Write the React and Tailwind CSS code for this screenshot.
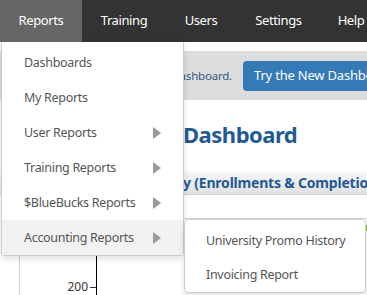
import React from 'react';

const menuItems = [
  { label: 'Dashboards' },
  { label: 'My Reports' },
  { label: 'User Reports', sub: true },
  { label: 'Training Reports', sub: true },
  { label: '$BlueBucks Reports', sub: true },
  { label: 'Accounting Reports', sub: true, active: true },
];

const navItems = [
  { label: 'Reports', w: 'w-[82px]', active: true },
  { label: 'Training', w: 'w-[84px]' },
  { label: 'Users', w: 'w-[70px]' },
  { label: 'Settings', w: 'w-[85px]' },
  { label: 'Help', w: 'w-[60px]' },
];

const Arrow = () => (
  <svg width="8" height="12" viewBox="0 0 8 12" className="shrink-0">
    <path d="M0 0 L8 6 L0 12 Z" fill="#999" />
  </svg>
);

const App = () => {
  return (
    <div className="relative w-[367px] h-[295px] overflow-hidden bg-white font-['Noto_Sans',sans-serif]">
      {/* top nav */}
      <nav className="flex h-[42px] bg-[#333333] text-white text-[13px] tracking-[-0.4px]">
        {navItems.map((n) => (
          <div
            key={n.label}
            className={`${n.w} shrink-0 flex items-center justify-center ${n.active ? 'bg-[#666666]' : ''}`}
          >
            {n.label}
          </div>
        ))}
      </nav>

      {/* page behind the menu */}
      <main className="flex flex-col">
        <div className="mt-[9px] h-[49px] bg-[#dddddd] flex items-center whitespace-nowrap">
          <div className="w-[232px] shrink-0 flex justify-end overflow-hidden text-[11.5px] tracking-[-0.2px] text-[#2d5a82]">
            You are viewing the classic dashboard.
          </div>
          <div className="ml-[11px] h-[30px] rounded-[4px] bg-[#337ab7] text-white text-[13px] tracking-[-0.2px] pl-[11px] pr-3 flex items-center">
            Try the New Dashboard
          </div>
        </div>

        <h1 className="mt-[19px] pl-[183px] text-[22px] tracking-[-0.5px] leading-[30px] font-bold text-[#1f5a96] whitespace-nowrap">
          Dashboard
        </h1>

        <div className="mt-[22px] h-[24px] bg-gradient-to-b from-[#f7f7f7] to-[#e2e2e2] border-b border-[#cfcfcf] flex items-center whitespace-nowrap text-[14px] tracking-[-0.2px] font-bold text-[#1f5a96]">
          <div className="w-[183px] shrink-0 flex justify-end overflow-hidden">Monthly Training Activit</div>
          <span>y (Enrollments &amp; Completions)</span>
        </div>

        <div className="mt-[23px] ml-[19px] h-[80px] border-l border-t border-[#d4d4d4] flex">
          <div className="w-[76px] shrink-0 flex flex-col justify-end pb-[5px]">
            <div className="flex items-center justify-end text-[12px] text-[#333] leading-none">
              200<span className="ml-[2px] w-[6px] h-px bg-[#333]" />
            </div>
          </div>
          <div className="w-px bg-black" />
          <div className="flex-1 flex justify-end pt-[6px]">
            <div className="w-[4px] h-[6px] bg-[#8cc63f]" />
          </div>
        </div>
      </main>

      {/* reports dropdown */}
      <div className="absolute left-[1px] top-[42px] w-[183px] bg-white border border-t-0 border-[#cccccc] rounded-b-[4px] shadow-[0_3px_6px_rgba(0,0,0,0.12)] pt-[3px] text-[12.5px] tracking-[-0.3px] text-[#555555]">
        {menuItems.map((m) => (
          <div
            key={m.label}
            className={`h-[35px] flex items-center justify-between pl-[22px] pr-[22px] ${m.active ? 'bg-[#f2f2f2]' : ''}`}
          >
            <span className="pt-[2px]">{m.label}</span>
            {m.sub && <Arrow />}
          </div>
        ))}
      </div>

      {/* accounting submenu */}
      <div className="absolute left-[184px] top-[219px] w-[182px] h-[74px] bg-white border border-[#cccccc] rounded-[4px] shadow-[0_3px_6px_rgba(0,0,0,0.12)] pt-[4px] text-[12.5px] tracking-[-0.3px] text-[#555555]">
        <div className="h-[34px] flex items-center pl-[21px]">University Promo History</div>
        <div className="h-[34px] flex items-center pl-[21px] pt-[1px]">Invoicing Report</div>
      </div>
    </div>
  );
};

export default App;
